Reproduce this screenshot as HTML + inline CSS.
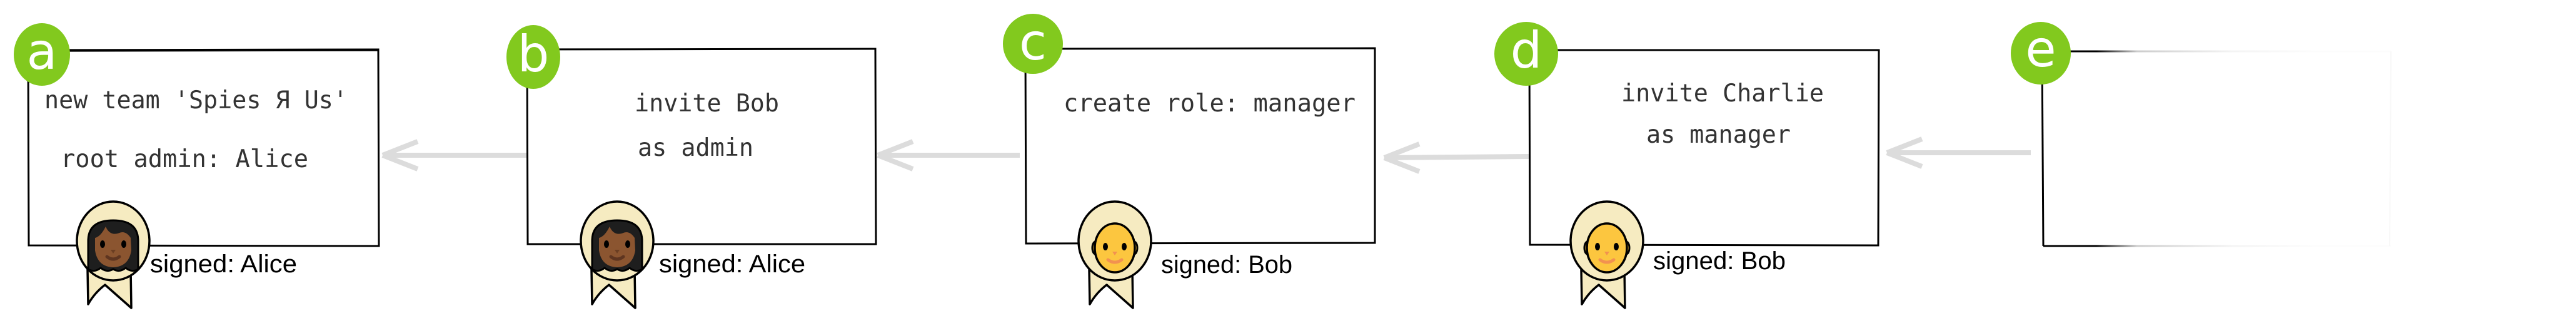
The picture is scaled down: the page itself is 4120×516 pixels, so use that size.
<!DOCTYPE html>
<html><head><meta charset="utf-8"><style>
html,body{margin:0;padding:0;background:#fff;}
svg{display:block;}
.m{font-family:"DejaVu Sans Mono","Liberation Mono",monospace;font-size:39px;fill:#333;}
.s{font-family:"Liberation Sans",sans-serif;font-size:40px;fill:#000;}
.bl{font-family:"DejaVu Sans","Liberation Sans",sans-serif;font-size:80px;fill:#fff;text-anchor:middle;}
</style></head><body>
<svg width="4120" height="516" viewBox="0 0 4120 516" xmlns="http://www.w3.org/2000/svg">
<defs>
<linearGradient id="fade" x1="3266" y1="0" x2="3700" y2="0" gradientUnits="userSpaceOnUse">
<stop offset="0" stop-color="#000"/><stop offset="0.2" stop-color="#000"/><stop offset="0.35" stop-color="#ccc"/><stop offset="0.7" stop-color="#f4f4f4"/><stop offset="1" stop-color="#fcfcfc"/>
</linearGradient>
<g id="med">
<path d="M-41,430 L-40,486 Q-30,468 -13,455 L29,492 L28,430 Z" fill="#f6ebc1" stroke="#000" stroke-width="3.5" stroke-linejoin="round"/>
<ellipse cx="0" cy="385" rx="58" ry="63" fill="#f6ebc1" stroke="#000" stroke-width="3.5"/>
</g>
<g id="alice">
<use href="#med"/>
<path d="M-40,430 L-40,385 Q-40,352 0,352 Q40,352 40,385 L40,430 Q30,436 20,428 Q10,436 0,430 Q-10,436 -20,428 Q-30,436 -40,430 Z" fill="#1e1e1e" stroke="#000" stroke-width="3"/>
<path d="M-29,380 Q-20,378 -12,362 Q-5,378 10,372 Q20,368 28,380 L29,400 Q25,426 0,427 Q-25,426 -29,400 Z" fill="#8b5530"/>
<ellipse cx="-17" cy="390" rx="4" ry="6" fill="#000"/>
<ellipse cx="17" cy="390" rx="4" ry="6" fill="#000"/>
<path d="M-4,399 L4,399 L0,405 Z" fill="#6b3e22"/>
<path d="M-10,410 Q0,418 10,410" stroke="#5e3520" stroke-width="5" fill="none" stroke-linecap="round"/>
</g>
<g id="bob">
<use href="#med"/>
<ellipse cx="-31" cy="396" rx="5" ry="10" fill="#fcc63f" stroke="#000" stroke-width="3"/>
<ellipse cx="31" cy="396" rx="5" ry="10" fill="#fcc63f" stroke="#000" stroke-width="3"/>
<ellipse cx="0" cy="396" rx="32" ry="39" fill="#fcc63f" stroke="#000" stroke-width="3.5"/>
<ellipse cx="-15" cy="394" rx="4" ry="6" fill="#000"/>
<ellipse cx="15" cy="394" rx="4" ry="6" fill="#000"/>
<path d="M-4,402 L4,402 L0,408 Z" fill="#f29250"/>
<path d="M-11,415 Q0,423 11,415" stroke="#f29250" stroke-width="5" fill="none" stroke-linecap="round"/>
</g>
</defs>

<g stroke="#dcdcdc" stroke-width="8" fill="none">
<path d="M612,248 L843,248 M612,248 L668,226 M612,248 L668,270"/>
<path d="M1404,248 L1631,248 M1404,248 L1460,226 M1404,248 L1460,270"/>
<path d="M2214,252 L2446,250 M2214,252 L2270,230 M2214,252 L2270,274"/>
<path d="M3018,244 L3248,244 M3018,244 L3074,222 M3018,244 L3074,266"/>
</g>

<g fill="none" stroke="#000" stroke-width="3">
<path d="M45,80 L605,79 L606,393 L46,392 Z"/>
<path d="M47,82 L604,81" stroke-width="1.5"/>
<path d="M843,79 L1400,78 L1401,390 L844,390 Z"/>
<path d="M1640,78 L2199,77 L2199,388 L1641,389 Z"/>
<path d="M2446,80 L3005,80 L3004,392 L2447,391 Z"/>
<path d="M3266,82 L3268,393"/>
</g>
<path d="M3266,82 L3824,82 M3268,393 L3824,393" stroke="url(#fade)" stroke-width="3" fill="none"/>
<path d="M3824,82 L3822,393" stroke="#f8f8f8" stroke-width="2" fill="none"/>

<text class="m" x="71" y="173" textLength="485" lengthAdjust="spacingAndGlyphs">new team 'Spies Я Us'</text>
<text class="m" x="97" y="267" textLength="396" lengthAdjust="spacingAndGlyphs">root admin: Alice</text>
<text class="m" x="1015" y="178" textLength="231" lengthAdjust="spacingAndGlyphs">invite Bob</text>
<text class="m" x="1020" y="249" textLength="185" lengthAdjust="spacingAndGlyphs">as admin</text>
<text class="m" x="1701" y="178" textLength="467" lengthAdjust="spacingAndGlyphs">create role: manager</text>
<text class="m" x="2593" y="162" textLength="324" lengthAdjust="spacingAndGlyphs">invite Charlie</text>
<text class="m" x="2633" y="228" textLength="231" lengthAdjust="spacingAndGlyphs">as manager</text>

<g fill="#82c91e">
<ellipse cx="67" cy="87" rx="45" ry="50"/>
<ellipse cx="853" cy="91" rx="43" ry="51"/>
<ellipse cx="1652" cy="70" rx="48" ry="48"/>
<ellipse cx="2441" cy="86" rx="51" ry="51"/>
<ellipse cx="3264" cy="85" rx="48" ry="50"/>
</g>
<text class="bl" x="67" y="110">a</text>
<text class="bl" x="853" y="114">b</text>
<text class="bl" x="1652" y="95">c</text>
<text class="bl" x="2441" y="108">d</text>
<text class="bl" x="3264" y="106">e</text>

<use href="#alice" x="181"/>
<use href="#alice" x="987"/>
<use href="#bob" x="1783"/>
<use href="#bob" x="2570"/>

<text class="s" x="240" y="435" textLength="235" lengthAdjust="spacingAndGlyphs">signed: Alice</text>
<text class="s" x="1054" y="435" textLength="234" lengthAdjust="spacingAndGlyphs">signed: Alice</text>
<text class="s" x="1857" y="436" textLength="210" lengthAdjust="spacingAndGlyphs">signed: Bob</text>
<text class="s" x="2644" y="430" textLength="212" lengthAdjust="spacingAndGlyphs">signed: Bob</text>
</svg>
</body></html>
